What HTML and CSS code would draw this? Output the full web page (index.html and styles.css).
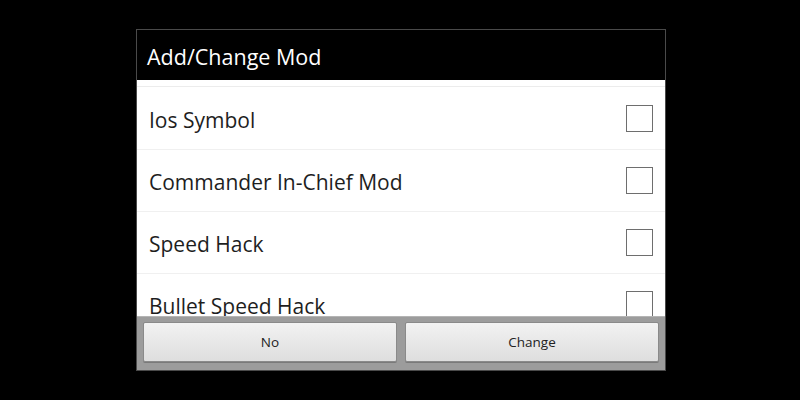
FILE: index.html
```html
<!DOCTYPE html>
<html lang="en">
<head>
    <meta charset="UTF-8">
    <title>Add/Change Mod</title>
    <link rel="stylesheet" href="styles.css">
</head>
<body>
    <div class="dialog">
        <div class="dialog-title">Add/Change Mod</div>
        <div class="mod-list">
            <label class="mod-row">
                <span class="mod-name">Ios Symbol</span>
                <span class="check"></span>
            </label>
            <label class="mod-row">
                <span class="mod-name">Commander In-Chief Mod</span>
                <span class="check"></span>
            </label>
            <label class="mod-row">
                <span class="mod-name">Speed Hack</span>
                <span class="check"></span>
            </label>
            <label class="mod-row">
                <span class="mod-name">Bullet Speed Hack</span>
                <span class="check"></span>
            </label>
        </div>
        <div class="button-bar">
            <button class="btn">No</button>
            <button class="btn">Change</button>
        </div>
    </div>
</body>
</html>
```

FILE: styles.css
```css
body {
    margin: 0;
    background-color: #000;
    font-family: 'Open Sans', 'Noto Sans', sans-serif;
    height: 400px;
    overflow: hidden;
}

.dialog {
    width: 528px;
    margin: 29px 0 0 136px;
    border: 1px solid #4a4a4a;
    background-color: #fff;
    display: flex;
    flex-direction: column;
    height: 340px;
}

.dialog-title {
    background-color: #000;
    color: #fff;
    font-size: 21.5px;
    height: 50px;
    line-height: 54px;
    padding-left: 10px;
}

.mod-list {
    flex: 1;
    overflow: hidden;
    padding-top: 6px;
}

.mod-list::before {
    content: "";
    display: block;
    height: 1px;
    background-color: #ececec;
    margin-bottom: 1px;
}

.mod-row {
    display: flex;
    align-items: center;
    justify-content: space-between;
    height: 62px;
    padding: 0 12px;
    border-bottom: 1px solid #f0f0f0;
    box-sizing: border-box;
}

.mod-name {
    font-size: 21px;
    color: #1e1e1e;
    padding-top: 2px;
}

.check {
    width: 25px;
    height: 25px;
    border: 1px solid #6e6e6e;
    margin-top: -1px;
}

.button-bar {
    display: flex;
    gap: 8px;
    padding: 5px 6px 8px 6px;
    background-color: #9c9c9c;
    border-top: 1px solid #b4b4b4;
}

.btn {
    flex: 1;
    height: 40px;
    border: 1px solid #8a8a8a;
    border-radius: 2px;
    background: linear-gradient(#f2f2f2, #dedede);
    box-shadow: 0 1px 0 #7a7a7a;
    font-family: 'Open Sans', 'Noto Sans', sans-serif;
    font-size: 13.5px;
    color: #222;
    padding: 0;
}
```
